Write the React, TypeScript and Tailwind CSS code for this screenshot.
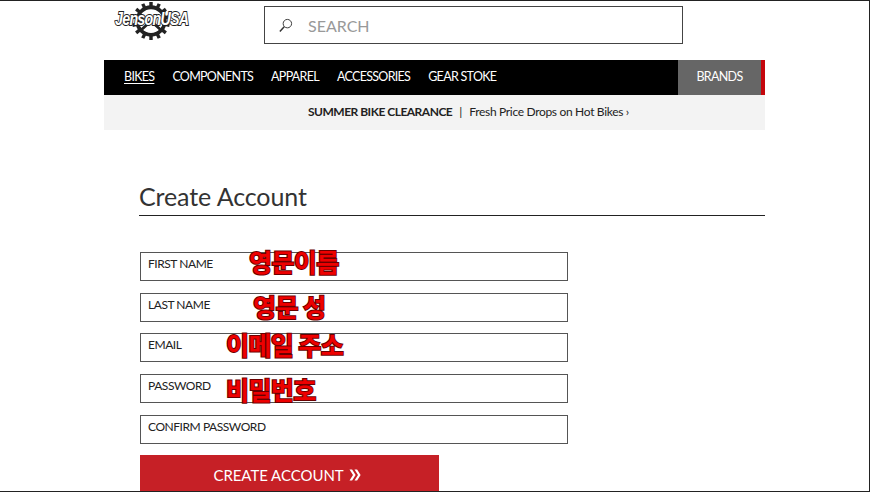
const fields = [
  { label: "FIRST NAME", note: "영문이름", noteClass: "left-[108px] -top-[9px]" },
  { label: "LAST NAME", note: "영문 성", noteClass: "left-[112px] -top-[5px]" },
  { label: "EMAIL", note: "이메일 주소", noteClass: "left-[85px] -top-[7px]" },
  { label: "PASSWORD", note: "비밀번호", noteClass: "left-[85px] -top-[3px]" },
  { label: "CONFIRM PASSWORD", note: "", noteClass: "" },
];

function Logo() {
  const teeth = Array.from({ length: 14 }, (_, i) => (i * 360) / 14);
  return (
    <div className="relative w-[76px] h-[42px]">
      {/* chainring */}
      <svg viewBox="0 0 40 40" className="absolute left-[17px] top-[1px] w-[38px] h-[38px]">
        {teeth.map((a) => (
          <rect key={a} x="18.2" y="0" width="3.6" height="7" fill="#222" transform={`rotate(${a} 20 20)`} />
        ))}
        <circle cx="20" cy="20" r="14.5" fill="none" stroke="#222" strokeWidth="4" />
        <path d="M20 20 9 30M20 20l11 10" stroke="#222" strokeWidth="3" />
      </svg>
      <span className="absolute left-0 top-[8px] origin-left scale-x-[0.79] font-['Liberation_Sans',sans-serif] text-[18px] leading-[20px] font-bold italic tracking-[-0.9px] text-white [-webkit-text-stroke:2px_#222] [paint-order:stroke] whitespace-nowrap">
        JensonUSA
      </span>
    </div>
  );
}

function SearchIcon() {
  return (
    <svg viewBox="0 0 16 16" className="w-[15px] h-[15px]" fill="none" stroke="#333">
      <circle cx="10" cy="6" r="4.5" strokeWidth="1" />
      <path d="M6.6 9.4 2 14.5" strokeWidth="1.6" />
    </svg>
  );
}

function DoubleChevron() {
  return (
    <svg viewBox="0 0 12 12" className="w-[12px] h-[12px]" fill="white">
      <path d="M0.5 0.5h2.6L6.6 6l-3.5 5.5H0.5L4 6z" />
      <path d="M5.5 0.5h2.6L11.6 6l-3.5 5.5H5.5L9 6z" />
    </svg>
  );
}

export default function App() {
  return (
    <div className="h-[492px] w-[870px] overflow-hidden bg-white border-t border-r border-b border-[#222] font-['Lato','Noto_Sans_CJK_KR',sans-serif] text-[#222]">
      <div className="ml-[104px] w-[661px]">
        {/* header */}
        <div className="flex h-[59px] items-start pl-[11px]">
          <Logo />
          <div className="ml-[73px] mt-[5px] flex h-[38px] w-[419px] items-center border border-[#444] pl-[13px]">
            <SearchIcon />
            <span className="ml-[15px] pt-[1px] text-[16px] text-[#999]">SEARCH</span>
          </div>
        </div>

        {/* nav */}
        <div className="flex h-[35px] bg-black text-[12.5px] tracking-[-0.7px] text-white">
          <div className="flex flex-1 items-center gap-[18px] pb-[1px] pl-[20px]">
            <span className="underline underline-offset-2">BIKES</span>
            <span>COMPONENTS</span>
            <span>APPAREL</span>
            <span>ACCESSORIES</span>
            <span>GEAR STOKE</span>
          </div>
          <div className="flex w-[83px] items-center justify-center bg-[#666] pb-[1px]">BRANDS</div>
          <div className="w-[4px] bg-[#c4060c]" />
        </div>

        {/* promo */}
        <div className="flex h-[35px] items-center bg-[#f3f3f3] pb-[2px] pl-[204px] text-[12px]">
          <span className="font-bold tracking-[-0.5px]">SUMMER BIKE CLEARANCE</span>
          <span className="mx-[7px]">|</span>
          <span className="tracking-[-0.32px]">Fresh Price Drops on Hot Bikes ›</span>
        </div>

        {/* form */}
        <div className="ml-[36px] mt-[49px]">
          <h1 className="-ml-[1px] h-[37px] border-b border-[#222] text-[25px] leading-[34px] tracking-[-0.1px] text-[#333]">Create Account</h1>
          <div className="mt-[36px] flex w-[428px] flex-col gap-[11.7px]">
            {fields.map((f) => (
              <div key={f.label} className="relative flex h-[29px] items-center border border-[#555] pb-[5px] pl-[7px] text-[12px] tracking-[-0.45px]">
                {f.label}
                {f.note && (
                  <span className={`absolute ${f.noteClass} font-['Noto_Sans_CJK_KR',sans-serif] text-[25px] leading-[34px] font-bold tracking-[-0.6px] whitespace-nowrap text-[#ee0000] [-webkit-text-stroke:2px_#6a0000] [paint-order:stroke]`}>
                    {f.note}
                  </span>
                )}
              </div>
            ))}
          </div>
          <div className="mt-[11.2px] flex h-[37px] w-[299px] items-center justify-center gap-[5px] bg-[#c62026] pt-[3px] pr-[5px] text-[15px] tracking-[-0.05px] text-white">
            CREATE ACCOUNT
            <DoubleChevron />
          </div>
        </div>
      </div>
    </div>
  );
}
